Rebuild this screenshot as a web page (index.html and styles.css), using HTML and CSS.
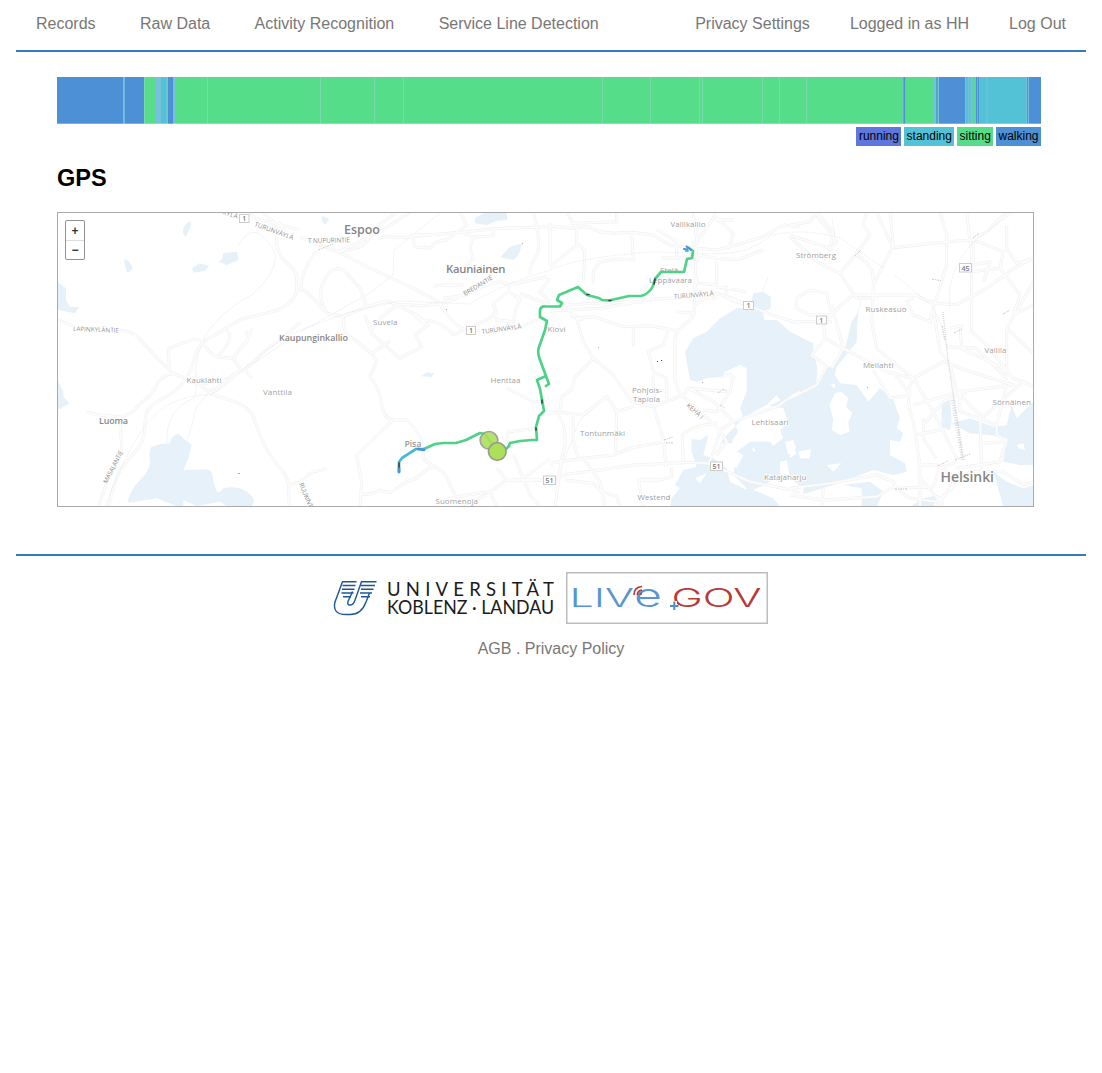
FILE: index.html
```html
<!DOCTYPE html>
<html lang="en">
<head>
<meta charset="utf-8">
<title>Activity Recognition</title>
<link rel="stylesheet" href="styles.css">
</head>
<body>
<header class="topbar">
  <nav class="nav nav-main"><a>Records</a><a>Raw Data</a><a>Activity Recognition</a><a>Service Line Detection</a></nav>
  <nav class="nav nav-user"><a>Privacy Settings</a><a>Logged in as HH</a><a>Log Out</a></nav>
</header>
<main class="content">
  <svg class="timeline" viewBox="57 77 984 47" preserveAspectRatio="none">
    <rect x="57" y="77" width="984" height="47" fill="#55dd8a"/>
    <path fill="#4d90d6" d="M57 77h87v47H57zM168 77h5v47h-5zM903.300 77h2v47h-2zM936.300 77h1.300v47h-1.300zM939 77h26v47h-26zM976 77h3v47h-3zM1026 77h15v47h-15z"/>
    <path fill="#53c2d6" d="M161 77h5.500v47H161zM965 77h7.500v47H965zM979.500 77H1026v47h-46.500z"/>
    <path fill="#76c1dd" d="M155.500 77h5.500v47h-5.500zM166.500 77h1.500v47h-1.500zM173 77h2v47h-2zM123 77h1.800v47H123zM902.600 77h.7v47h-.7zM905.300 77h.7v47h-.7zM934 77h2v47h-2zM938 77h1v47h-1zM965 77h1v47h-1zM968 77h1v47h-1zM970.500 77h2v47h-2zM977.300 77h.7v47h-.7zM986.500 77h1v47h-1zM1026 77h1v47h-1zM1028 77h1v47h-1z"/>
    <path fill="#78d9ad" d="M144 77h1v47h-1zM207 77h1v47h-1zM320 77h1v47h-1zM374 77h1v47h-1zM403 77h1v47h-1zM602 77h1v47h-1zM650 77h1v47h-1zM699 77h1v47h-1zM702 77h1v47h-1zM762 77h1v47h-1zM779 77h1v47h-1zM806 77h1v47h-1z"/>
    <path fill="#fff" opacity=".25" d="M57 123h984v1H57z"/>
  </svg>
  <div class="legend"><span class="running">running</span><span class="standing">standing</span><span class="sitting">sitting</span><span class="walking">walking</span></div>
  <h2>GPS</h2>
  <div class="map">
    <svg class="tiles" viewBox="58 213 975 293">
      <defs>
        <g id="roads" fill="none" stroke-linejoin="round">
          <g transform="translate(50 205) scale(.33333)">
            <path d="M22 345L70 362M208 376Q245 378 270 402C310 450 340 480 370 505L450 540L490 570C560 590 590 600 610 635C640 720 650 740 690 790Q715 815 715 840L718 905M715 840L750 832M145 905C165 850 175 810 200 770Q220 745 215 720L210 660M175 905C190 850 200 800 230 770C270 725 285 710 285 655C285 610 300 600 350 575Q400 545 420 500C440 440 440 425 470 405C530 370 550 350 590 338L660 322Q720 308 740 260L740 210C720 170 690 170 680 120L680 60L640 22M685 50L700 75"/>
            <path d="M110 622L150 630L210 636Q245 630 270 595C300 580 310 560 325 530Q350 505 370 507M358 490L355 430L430 403Q450 400 470 430C495 460 500 455 550 460L570 490M505 450Q540 420 540 390L525 368M550 460Q575 420 590 412L605 370M585 380L600 395M480 565Q530 530 555 505L585 492L605 520M585 492C630 460 640 430 690 405L750 352"/>
            <path d="M600 22L615 40L750 75"/>
          </g>
          <g transform="translate(300 205) scale(.33333)">
            <path d="M0 97Q60 120 115 140L200 185L330 245L415 290C450 340 460 360 490 372L540 378M665 365L730 335M0 260Q10 180 50 140M115 140L180 110L240 80L330 22M115 140Q190 130 200 110L235 60L290 22M235 102C260 85 280 105 330 95L480 82L600 70L750 65"/>
            <path d="M0 245L50 290L80 325L130 335L200 305L260 288L290 298L370 302L430 295M80 325C50 270 60 240 90 200Q120 180 140 205L180 250L200 305M130 335C130 390 140 390 165 405L215 445L230 470L210 515Q240 550 245 600Q250 640 280 645L320 645Q370 690 370 740L370 760C400 790 430 790 440 820L465 870M280 645L170 750L185 830L180 905M180 868Q220 870 240 855C290 880 290 830 340 825L400 780M195 330L215 385L300 460L365 425L345 390L385 360L350 330L290 300L240 340L210 380M370 345Q430 350 460 390L490 375M215 445L270 408M340 325L375 360"/>
            <path d="M335 90L345 125L390 130L410 110L440 105L500 60L480 22M345 125L335 90L420 88M485 82L520 97L510 130L520 160L500 180M520 97L580 92L580 75M700 22L715 90L715 140L690 190L690 210M400 243L440 240L490 240M430 295L480 275M430 280L500 270L560 240L600 230L630 240L740 215M625 240L625 260L580 295L590 325L550 350L520 365M625 260L660 280L650 305L640 350L590 345L580 320M660 265L750 300M750 220L720 260L750 290"/>
            <path d="M410 890L500 870L570 860L620 825L740 825M560 870L480 905M620 825L590 790M640 750L670 820L690 870L720 905M615 735L625 680L710 670M670 820L750 760M620 548L640 560L700 590L740 590M0 830L40 800L80 792M570 860L590 905"/>
          </g>
          <g transform="translate(550 205) scale(.33333)">
            <path d="M0 318L150 310L310 283L380 278M490 265Q530 270 590 300L680 335L750 355M0 305L120 295L280 290M430 22L440 100L432 330C400 370 375 370 375 410L375 520Q380 560 400 575L510 675Q500 720 475 780M430 310C450 280 470 275 500 280M0 62L60 70L110 65L150 80L190 85L245 82L310 90L360 120L440 130L500 135L560 120L640 95L700 60L750 65M245 82L250 165L200 162L150 170L130 200L130 235M50 22L80 70L80 120L0 185M80 115L105 135L100 230M0 55L0 180M200 22L200 50L60 55M320 75L380 110M440 110L490 40L495 22M380 110L380 160L450 163M450 150Q500 165 570 162L640 135M540 120L550 85L490 30M495 45L550 45M440 210L440 235L500 240M500 170L500 245M335 158L410 160"/>
            <path d="M40 300L80 340L100 410L130 460L75 515L65 555L35 575L30 620M80 340L130 335L220 365L300 362L385 378L430 335M60 330Q120 350 80 340M250 365L250 425M355 375L340 420L295 440L310 500L350 520L350 580M130 460L190 510L245 590L310 605L400 570L415 550L530 560M0 625L30 622L100 630L170 575L200 620L250 605M200 610L197 740M70 635L70 710L85 760M25 630Q60 680 35 760L15 905M310 605L340 700L348 785M0 775L100 760L190 750L240 730L340 710M0 830L50 808L150 795L250 780L420 772L480 775M510 790L600 830L750 860M100 760L150 830L165 905M45 825L130 835L155 860L200 875L210 905M400 780L397 690Q430 660 500 655M365 785L365 815L330 825L265 825L280 905M510 675L550 650L680 605L730 570L750 560M415 550L490 590L550 650M380 320L430 325M310 510L310 550L350 560M530 240L530 280L590 300M590 260L500 245M510 675L530 710L500 750M515 520Q530 500 550 515L540 560L500 620L460 615"/>
          </g>
          <g transform="translate(790 205) scale(.33333)">
            <path d="M0 350L80 350L125 350M105 350Q150 300 190 270L380 270Q420 300 500 298L590 250L680 185L730 160M300 22L310 120L250 240L245 350L260 430L370 520Q340 570 370 650L390 780L390 905M260 22Q290 90 310 128L470 110L550 105L640 140L630 190L690 270M530 22L545 150L545 380L590 420L670 520L730 545M545 105L590 80L650 22M650 60L650 130L680 175L730 160M450 22L470 90L470 180L430 310L450 440L480 480L500 560L570 630L575 800M0 60L60 50L80 22L130 80L120 130L0 90M80 30L140 110L100 165M0 95L80 170L150 205L200 280L250 280M150 205L195 150L240 90L220 60L230 22M125 300L160 430L290 500L370 520M20 280L60 255L110 265L125 330L60 330L20 310L20 280M100 350L105 400L65 450L110 485L80 540L0 580M105 400L155 430M125 490L160 430M195 150Q250 170 250 230"/>
            <path d="M370 520L460 470L540 500L670 540L510 560L370 600M470 425L560 430L650 520L650 370L680 320L730 230M650 370L730 445M510 360L515 430L660 500M480 370L520 360M310 500L360 570L300 580L250 495M370 520L430 620L500 760M400 660L460 590L530 560M510 560L510 620L570 640L620 660L650 540M620 660L620 690L650 705L630 770L500 790M400 640L400 700L440 760M380 690L470 670M370 280L350 290L370 330L420 350L430 310M690 270L670 330L730 300M550 110L550 180L600 170L580 230M545 200L630 190M575 640L700 530L730 545M580 715L640 710M0 850L120 835L260 810L310 830L320 850L430 845L450 790L500 770M0 870L100 885L260 875L310 845L360 880L440 890L540 800L640 800L700 840L730 830M95 905L100 850M390 780L440 780L500 820L440 905M390 820L460 900"/>
          </g>
        </g>
      </defs>
      <rect x="57" y="212" width="977" height="295" fill="#fff"/>
      <g fill="#e7f1f9">
        <g transform="translate(50 205) scale(.33333)">
          <path d="M400 72Q410 45 424 50L420 70Q410 90 407 97Q395 85 400 72ZM223 162Q240 165 248 190Q240 205 230 200L224 180ZM426 190L448 175L478 182L465 198L430 203ZM505 172L518 160L520 145L560 140L566 165L530 180L518 175ZM22 230L48 250L48 285L60 305L87 307L75 325L22 315ZM22 525L40 560L40 575L58 595L30 612L22 610ZM232 890Q245 850 265 830Q295 805 300 775Q295 735 305 725Q335 715 360 715Q365 690 385 686Q405 705 425 720L415 760L400 795L470 793Q488 795 488 820L500 860Q510 865 520 850Q560 840 590 860Q612 875 612 890L605 905H530L510 890L440 903L400 885L400 903H380L320 880L240 893Z"/>
        </g>
        <g transform="translate(300 205) scale(.33333)"><path d="M65 32L88 42L75 60L67 50ZM525 40L550 25L560 22H620L622 45L590 48L560 60L525 55ZM602 155L630 125L668 115L655 150L640 165L612 160ZM363 514L380 502L402 505L395 516Z"/></g>
        <g transform="translate(550 205) scale(.33333)">
          <path d="M605 285L610 265L640 260L662 275L662 310L640 320L642 345L680 345L720 380L750 395L790 415V490L770 580L700 600L680 570L650 600L575 640L550 650L570 690L545 715L515 715L490 760L530 790L540 830L600 860V905H360L365 880L390 850L375 840L400 795L440 785L425 740V702L450 705L475 690L460 750L490 760L520 700L580 640L570 610L590 560L590 490L570 480L525 500L515 515L470 520L440 530L420 525L405 440L430 400L470 380L510 340L560 310L600 310Z"/>
          <path d="M560 740L600 710L680 710L680 680L620 650L660 600L750 560V905H560L590 850L550 810Z"/>
        </g>
        <g transform="translate(790 205) scale(.33333)">
          <path d="M0 398Q80 420 82 500L78 540L110 485L130 485L165 430L185 350L205 320L202 360L200 410L140 485L135 510L150 535L200 540L235 590L270 550L310 585L330 640L320 670L340 685L330 710L300 705L300 750L345 775L350 800L310 810L250 795L130 840L0 880ZM160 840L240 830L280 860L260 905H215V850Z"/>
          <path d="M455 590L480 580L485 650L480 675L455 670ZM485 655L540 640L610 665L650 660L665 600L680 640L730 590V780L690 780L640 770L650 700L600 690L540 685ZM610 800L650 830L700 850L730 840V905H640ZM360 905L400 880L445 870L430 905Z"/>
        </g>
      </g>
      <g fill="#fff">
        <g transform="translate(550 205) scale(.33333)"><path d="M605 665L620 618L650 600L700 610L715 655L690 675L700 700L670 722L640 690ZM705 710L730 705L738 730L715 750ZM690 770L710 765L720 820L760 850V905H690L670 880L610 855L670 825L690 815ZM605 725L618 735L610 742ZM560 740L580 750L560 790L545 780ZM435 820L470 805L450 835ZM545 710L570 670L575 710Z"/></g>
        <g transform="translate(790 205) scale(.33333)"><path d="M118 600L135 565L155 560L175 580L168 605L187 625L175 650L178 680L150 690L125 675L130 645ZM0 710L20 745L0 760ZM25 740L62 732L60 760L30 760ZM120 540L135 535V550ZM110 780L155 775L130 800ZM680 720L700 715L705 735L685 730Z"/></g>
      </g>
      <g fill="none" stroke="#e6f1f8" stroke-width=".7">
        <path d="M238 246Q250 225 262 236C278 250 280 260 266 280C250 300 248 295 235 305Q205 328 202 345C190 370 200 385 194 398Q165 410 167 443M214 386L196 408L192 425L186 445M204 385C250 375 265 350 300 335M300 332L370 293L393 275L394 250L440 213M555 507L560 470L580 420L610 395M768 277L762 294M861 300L856 322"/>
      </g>
      <use href="#roads" stroke="#f0f0f0" stroke-width="9"/>
      <use href="#roads" stroke="#fcfcfc" stroke-width="5.500"/>
      <g fill="none" stroke="#dadada" stroke-width=".7" stroke-dasharray="1 1.500">
        <path d="M106 505Q120 465 142 430Q165 395 210 395C240 380 250 355 300 330L350 312L400 301L470 304Q500 285 550 270Q575 258 650 252C720 253 740 260 770 236Q800 227 840 238L884 268M895 275L933 307L944 330M1012 213L976 240Q945 270 950 310M832 218L835 237"/>
      </g>
      <path d="M943 312L948 360L963 460" fill="none" stroke="#d4d4d4" stroke-width="1.300" stroke-dasharray="1 1"/>
      <path d="M953 400L963 460" fill="none" stroke="#dedede" stroke-width="4" stroke-dasharray="1 1.500"/>
      <g fill="none" stroke="#c9c9c9" stroke-width="1" stroke-dasharray="2 1 1 1"><path d="M718 393l5-4 4 2M720 405l5 3M664 440l9-3M666 443h8M938 466l10-5M955 460l15-6M942 326l3 15M954 333l8-4M855 256l6-6M318 250l15-6M1003 314l7-4M932 279l10 2M895 489h12M973 238l6-5"/></g>
      <path d="M657 361h1v1h-1zM661 360h1v1h-1z" fill="#444"/>
      <path d="M598 347h1v1h-1zM702 382h1v1h-1zM522 243h1v1h-1zM446 309h1v1h-1zM238 473h2v1h-2zM867 387h1v1h-1z" fill="#aaa"/>

      <g class="shields">
        <rect x="239.500" y="214.500" width="9.500" height="8"/><rect x="466.500" y="326.500" width="9" height="8"/><rect x="743.500" y="301.500" width="10" height="8"/><rect x="816.500" y="316" width="10" height="8"/><rect x="959.500" y="263.500" width="12" height="8.500"/><rect x="710.500" y="462" width="12" height="8.500"/><rect x="543.500" y="476" width="12" height="8.500"/>
        <text x="242.200" y="221.200">1</text><text x="469" y="333.200">1</text><text x="746.500" y="308.200">1</text><text x="819.300" y="322.800">1</text><text x="961.500" y="270.500">45</text><text x="712.500" y="469">51</text><text x="545.500" y="483">51</text>
      </g>
      <g class="labels">
        <text class="town" x="344" y="234" textLength="36">Espoo</text>
        <text class="town2" x="446" y="273.300" textLength="59.500">Kauniainen</text>
        <text class="city" x="940.500" y="482" textLength="53.500">Helsinki</text>
        <text class="village" x="279" y="341" textLength="69">Kaupunginkallio</text>
        <text class="village" x="99" y="424" textLength="29">Luoma</text>
        <text class="village light" x="404.500" y="447" textLength="17">Pisa</text>
        <text x="186.500" y="383.300" textLength="35">Kauklahti</text><text x="263" y="394.500" textLength="29">Vanttila</text><text x="373" y="324.500" textLength="24.500">Suvela</text><text x="490.500" y="383" textLength="30">Henttaa</text><text x="670.500" y="227" textLength="35">Vallikallio</text><text x="660" y="273">Etelä-</text><text x="649" y="283" textLength="43">Leppävaara</text><text x="547.500" y="331.500" textLength="18">Klovi</text><text x="632" y="392.500" textLength="30">Pohjois-</text><text x="633" y="402" textLength="27">Tapiola</text><text x="580" y="435.500" textLength="45">Tontunmäki</text><text x="751.500" y="424.500" textLength="37">Lehtisaari</text><text x="764" y="480" textLength="42.500">Katajaharju</text><text x="637.500" y="500" textLength="33">Westend</text><text x="435.500" y="503.500" textLength="42.500">Suomenoja</text><text x="796" y="257.500" textLength="40">Strömberg</text><text x="865.500" y="311.500" textLength="41">Ruskeasuo</text><text x="863" y="367.500" textLength="30.500">Meilahti</text><text x="984.500" y="352.500" textLength="22">Vallila</text><text x="992.500" y="405" textLength="38.500">Sörnäinen</text>
      </g>
      <g class="roadnames">
        <text transform="translate(222 214) rotate(17)" textLength="16">KYLÄ</text>
        <text transform="translate(254 226) rotate(20)" textLength="41">TURUNVÄYLÄ</text>
        <text transform="translate(308 243) rotate(-1)" textLength="42">T NUPURINTIE</text>
        <text transform="translate(465 296) rotate(-31)" textLength="33">BREDANTIE</text>
        <text transform="translate(482 334) rotate(-8)" textLength="40">TURUNVÄYLÄ</text>
        <text transform="translate(674 299) rotate(-5)" textLength="40">TURUNVÄYLÄ</text>
        <text transform="translate(73 331) rotate(2)" textLength="46">LAPINKYLÄNTIE</text>
        <text transform="translate(107 484) rotate(-63)" textLength="36">MASALANTIE</text>
        <text transform="translate(299 484) rotate(68)" textLength="26">RUUKINT</text>
        <text transform="translate(686 406) rotate(42)" textLength="20">KEHÄ I</text>
      </g>
      <g class="track">
        <path class="s" d="M424 449L435 444L443 443L456 443L466 440L480 433L485 434L495 448L503 452L509 446L510 443L520 441L532 440L537 440L536 427L539 416L544 411L540 389L537 380L546 376L549 384L546 386M546 376L540 360Q537 352 539 347L545 330L547 321L540 317V310Q541 306 545 306.500H560L562 303L557 300L559 295L578 287L587 295L599 298L602 300L609 300.500L629 296L641 296Q649 294 653 286L655 279L661 272L684 272L687 259L692 258L693 251L689 248"/>
        <path stroke="#4db8d2" d="M399 472V462L402 458L416 449L424 449"/><path stroke="#4d90d6" d="M399 472V468M418 449L424 450"/>
        <path stroke="#4d90d6" stroke-width="2" d="M684 249L687 249.500M686.500 246.500L691 250"/>
        <path stroke="#4db8d2" stroke-width="2" d="M686 251h2"/>
        <path d="M399 463v4M542 400v3M536 428v2M587 294.500h2M609 300.500h2M655 279l-1 5" stroke="#294b39" stroke-width="1.600"/>
        <circle cx="489" cy="440.300" r="8.800" opacity=".9"/><circle cx="497.300" cy="451.500" r="8.800"/>
      </g>
    </svg>
    <div class="zoom"><button>+</button><button>−</button></div>
  </div>
</main>
<footer class="footer">
  <div class="logos">
    <svg class="uni" width="222" height="52" viewBox="333 572 222 52">
      <g fill="none" stroke="#1c5796" stroke-width="1.400">
        <path d="M356.500 581.700H342.500L335 602Q332 614.500 346 614.500H350Q361.500 614.500 366 602L369.500 593M352.500 591.500L348 601.500Q347 605 350 605Q353 605 354.500 601.500L361.500 581.700H376.500"/>
        <path d="M342.500 585.500H355.500M342 589.300H354.500M341.500 593H353.500M343 596.700H351M361 585.500H375M361 589.300H373.500M360 593H372M361 596.700H370"/>
      </g>
      <text x="387" y="595.700" textLength="167">UNIVERSITÄT</text>
      <text x="387" y="613.700" textLength="167" lengthAdjust="spacingAndGlyphs">KOBLENZ · LANDAU</text>
    </svg>
    <svg class="livegov" width="202" height="52" viewBox="566 572 202 52">
      <rect x="566.750" y="572.750" width="200.500" height="50.500" fill="#fff" stroke="#bcbcbc" stroke-width="1.500"/>
      <text class="blue" x="569.500" y="606.500" textLength="64.500" lengthAdjust="spacingAndGlyphs">LIV</text>
      <text class="blue e" x="634" y="606.500" textLength="28" lengthAdjust="spacingAndGlyphs">e</text>
      <text class="red" x="671.500" y="606.500" textLength="90" lengthAdjust="spacingAndGlyphs">GOV</text>
      <g fill="none" stroke-width="1.700"><path stroke="#b83a35" d="M634 595Q634 587 642 586.500M637.300 595Q637.500 590.500 642 590M640.500 595Q640.500 593.500 642 593.300"/><path stroke="#fff" stroke-width="5" d="M674.500 601V611"/><path stroke="#4f91c8" stroke-width="2" d="M670 606H678.500M674.300 601.500V610"/></g>
    </svg>
  </div>
  <div class="links"><a>AGB</a> . <a>Privacy Policy</a></div>
</footer>
</body>
</html>
```

FILE: styles.css
```css
* { box-sizing: border-box; }
body { margin: 0 16px; background: #fff; font: 16px/20px "Liberation Sans", Arial, sans-serif; color: #000; }
svg { display: block; }
.topbar { display: flex; justify-content: space-between; height: 52px; padding: 14px 20px 0; border-bottom: 2px solid #347ac3; }
.nav { display: flex; color: #777; white-space: nowrap; }
.nav-main { gap: 44.400px; }
.nav-user { gap: 40px; }
.content { padding: 25px 45px 0 41px; height: 502px; }
.timeline { width: 984px; height: 47px; }
.legend { display: flex; justify-content: flex-end; gap: 2.600px; width: 984px; padding-top: 3px; font-size: 12px; line-height: 19px; }
.legend span { padding: 0 2.500px; }
.running { background: #5e77dd; }
.standing { background: #53c2d6; }
.sitting { background: #55dd8a; }
.walking { background: #4d90d6; }
h2 { margin: 18px 0 20px; font-size: 23.500px; line-height: 28px; }
.map { position: relative; width: 977px; height: 295px; border: 1px solid #aaa; }
.tiles { width: 975px; height: 293px; font-family: "Open Sans", "Noto Sans", sans-serif; }
.zoom { position: absolute; left: 7px; top: 7px; width: 20px; height: 40px; display: flex; flex-direction: column; border: 1px solid #929292; border-radius: 2px; background: #fff; }
.zoom button { height: 19px; padding: 0; border: 0; background: none; font: bold 12px/18px "Liberation Sans", sans-serif; color: #333; }
.zoom button + button { border-top: 1px solid #ddd; }
.labels text { fill: #a0a0a0; font-size: 8px; paint-order: stroke; stroke: #fff; stroke-width: 1.500px; }
.labels .town, .labels .town2, .labels .city, .labels .village { fill: #858585; font-weight: 600; }
.labels .town { font-size: 12.500px; }
.labels .town2 { font-size: 11.300px; }
.labels .city { font-size: 14px; }
.labels .village { font-size: 9px; }
.labels .light { fill: #999; }
.roadnames text { fill: #8f8f8f; font-size: 6.500px; paint-order: stroke; stroke: #fff; stroke-width: 1.500px; }
.shields rect { fill: #fff; stroke: #ccc; stroke-width: 1; }
.shields text { fill: #777; font-size: 7px; font-weight: 600; }
.track { fill: none; stroke-width: 2.700; stroke-linecap: round; stroke-linejoin: round; }
.track .s { stroke: #4ed287; }
.track circle { fill: #aedf59; stroke: #999; stroke-width: 1.700; }
.footer { border-top: 2px solid #347ac3; padding-top: 16px; text-align: center; color: #777; }
.logos { display: flex; justify-content: center; gap: 11px; padding-right: 1px; }
.uni, .livegov { position: relative; left: -.5px; }
.uni text { font: 18.500px Lato, sans-serif; fill: #1b1b1b; }
.livegov text { font: 300 26px Inter, sans-serif; }
.livegov .e { font-size: 33px; }
.livegov .blue { fill: #5796cf; }
.livegov .red { fill: #b83a35; }
.links { margin-top: 15px; }
```
